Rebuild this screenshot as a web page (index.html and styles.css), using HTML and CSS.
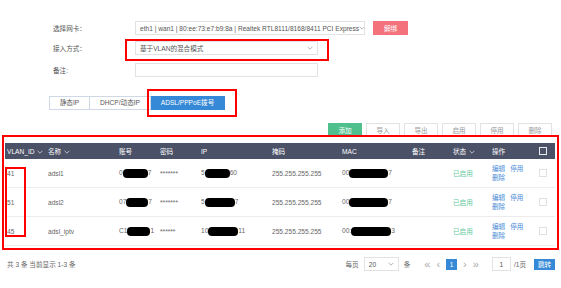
FILE: index.html
```html
<!DOCTYPE html>
<html lang="en">
<head>
    <meta charset="UTF-8">
    <title>WAN 设置</title>
    <link rel="stylesheet" href="styles.css">
</head>
<body>
    <div class="page">
        <div class="form">
            <div class="form-row row-nic">
                <label>选择网卡：</label>
                <div class="select wide">
                    <span>eth1 | wan1 | 80:ee:73:e7:b9:8a | Realtek RTL8111/8168/8411 PCI Express</span>
                    <svg class="chev" viewBox="0 0 10 6"><path d="M1 1l4 4 4-4" /></svg>
                </div>
                <button class="btn-red">解绑</button>
            </div>
            <div class="form-row row-mode">
                <label>接入方式：</label>
                <div class="select">
                    <span>基于VLAN的混合模式</span>
                    <svg class="chev" viewBox="0 0 10 6"><path d="M1 1l4 4 4-4" /></svg>
                </div>
            </div>
            <div class="form-row row-note">
                <label>备注:</label>
                <div class="input"></div>
            </div>
            <div class="tabs">
                <div class="tab">静态IP</div>
                <div class="tab">DHCP/动态IP</div>
                <div class="tab active">ADSL/PPPoE拨号</div>
            </div>
        </div>

        <div class="toolbar">
            <button class="tbtn green">添加</button>
            <button class="tbtn">导入</button>
            <button class="tbtn">导出</button>
            <button class="tbtn">启用</button>
            <button class="tbtn">停用</button>
            <button class="tbtn">删除</button>
        </div>

        <table class="grid">
            <colgroup>
                <col style="width:41px"><col style="width:71px"><col style="width:41px"><col style="width:41px">
                <col style="width:71px"><col style="width:70px"><col style="width:70px"><col style="width:41px">
                <col style="width:39px"><col style="width:47px"><col style="width:18px">
            </colgroup>
            <thead>
                <tr>
                    <th>VLAN_ID <svg class="chev w" viewBox="0 0 10 6"><path d="M1 1l4 4 4-4" /></svg></th>
                    <th>名称 <svg class="chev w" viewBox="0 0 10 6"><path d="M1 1l4 4 4-4" /></svg></th>
                    <th>账号</th>
                    <th>密码</th>
                    <th>IP</th>
                    <th>掩码</th>
                    <th>MAC</th>
                    <th>备注</th>
                    <th>状态 <svg class="chev w" viewBox="0 0 10 6"><path d="M1 1l4 4 4-4" /></svg></th>
                    <th>操作</th>
                    <th><span class="check dark"></span></th>
                </tr>
            </thead>
            <tbody>
                <tr>
                    <td>41</td>
                    <td>adsl1</td>
                    <td>0<span class="blot" style="width:25px"></span>7</td>
                    <td>*******</td>
                    <td>5<span class="blot" style="width:25px"></span>60</td>
                    <td>255.255.255.255</td>
                    <td>00<span class="blot" style="width:39px"></span>7</td>
                    <td></td>
                    <td class="ok">已启用</td>
                    <td class="ops"><a>编辑</a><a>停用</a><br><a>删除</a></td>
                    <td><span class="check"></span></td>
                </tr>
                <tr>
                    <td>51</td>
                    <td>adsl2</td>
                    <td>07<span class="blot" style="width:22px"></span>7</td>
                    <td>*******</td>
                    <td>5<span class="blot" style="width:30px"></span>7</td>
                    <td>255.255.255.255</td>
                    <td>00<span class="blot" style="width:39px"></span>7</td>
                    <td></td>
                    <td class="ok">已启用</td>
                    <td class="ops"><a>编辑</a><a>停用</a><br><a>删除</a></td>
                    <td><span class="check"></span></td>
                </tr>
                <tr>
                    <td>45</td>
                    <td>adsl_iptv</td>
                    <td>C1<span class="blot" style="width:23px"></span>1</td>
                    <td>******</td>
                    <td>10<span class="blot" style="width:30px"></span>11</td>
                    <td>255.255.255.255</td>
                    <td>00:<span class="blot" style="width:40px"></span>3</td>
                    <td></td>
                    <td class="ok">已启用</td>
                    <td class="ops"><a>编辑</a><a>停用</a><br><a>删除</a></td>
                    <td><span class="check"></span></td>
                </tr>
            </tbody>
        </table>

        <div class="footer">
            <div class="count">共 3 条 当前显示 1-3 条</div>
            <div class="pager">
                <span>每页</span>
                <div class="select small">
                    <span>20</span>
                    <svg class="chev" viewBox="0 0 10 6"><path d="M1 1l4 4 4-4" /></svg>
                </div>
                <span>条</span>
                <span class="nav first">«</span>
                <span class="nav">‹</span>
                <span class="cur">1</span>
                <span class="nav">›</span>
                <span class="nav">»</span>
                <div class="input page-in">1</div>
                <span>/1页</span>
                <button class="btn-blue">跳转</button>
            </div>
        </div>

        <!-- annotation boxes drawn on the screenshot -->
        <div class="mark mark-mode"></div>
        <div class="mark mark-tab"></div>
        <div class="mark mark-table"></div>
        <div class="mark mark-vlan"></div>
    </div>
</body>
</html>
```

FILE: styles.css
```css
body {
    margin: 0;
    background: #fff;
    font-family: "Liberation Sans", "Noto Sans CJK SC", sans-serif;
    font-size: 6.6px;
    color: #666;
}
.page {
    position: relative;
    width: 561px;
    height: 288px;
    overflow: hidden;
}
.form {
    padding: 21px 0 0 53px;
}
.form-row {
    display: flex;
    align-items: center;
    height: 14px;
}
.form-row label {
    width: 82px;
    color: #555;
}
.row-mode { margin-top: 6px; }
.row-note { margin-top: 8px; }
.select, .input {
    box-sizing: border-box;
    height: 14px;
    border: 1px solid #e2e2e2;
    background: #fff;
    display: flex;
    align-items: center;
    justify-content: space-between;
    padding: 0 4px;
    width: 183px;
    color: #555;
    white-space: nowrap;
    overflow: hidden;
}
.select.wide { width: 230px; }
.chev {
    width: 6px;
    height: 4px;
    flex: none;
    fill: none;
    stroke: #999;
    stroke-width: 1.2;
}
.chev.w {
    stroke: #e8eaf0;
    margin-left: 1px;
    vertical-align: middle;
}
.btn-red {
    margin-left: 8px;
    width: 35px;
    height: 14px;
    border: none;
    background: #f4727c;
    color: #fff;
    font: inherit;
    padding: 0;
}
.tabs {
    display: flex;
    margin: 19px 0 0 -4px;
}
.tab {
    box-sizing: border-box;
    height: 14px;
    line-height: 12px;
    border: 1px solid #cfd8e6;
    padding: 0;
    text-align: center;
    white-space: nowrap;
    color: #555;
}
.tab + .tab { border-left: none; }
.tab:first-child { width: 41px; }
.tab:nth-child(2) { width: 61px; }
.tab.active {
    width: 74px;
    background: #3689d6;
    border-color: #3689d6;
    color: #fff;
}
.toolbar {
    display: flex;
    justify-content: flex-end;
    gap: 4px;
    margin: 13px 9px 0 0;
}
.tbtn {
    width: 34px;
    height: 14px;
    padding: 0;
    border: 1px solid #e2e2e2;
    background: #fff;
    color: #999;
    font: inherit;
}
.tbtn.green {
    background: #4fc08d;
    border-color: #4fc08d;
    color: #fff;
}
.grid {
    margin: 6px 0 0 5px;
    width: 550px;
    table-layout: fixed;
    border-collapse: collapse;
}
.grid th {
    background: #4b5167;
    color: #fff;
    font-weight: normal;
    text-align: left;
    height: 16px;
    padding: 0 0 0 2px;
    white-space: nowrap;
}
.grid td {
    height: 28px;
    padding: 0 0 0 2px;
    border-bottom: 1px solid #ececec;
    white-space: nowrap;
}
.grid td.ok { color: #62c99c; }
.ops a {
    color: #4a8bd6;
    line-height: 9px;
}
.ops a:nth-child(2) { margin-left: 5px; }
.check {
    display: inline-block;
    width: 6px;
    height: 6px;
    border: 1px solid #e0e0e0;
    vertical-align: middle;
}
.check.dark { border-color: #e8eaf0; }
.blot {
    display: inline-block;
    height: 9px;
    background: #000;
    border-radius: 4px;
    vertical-align: middle;
}
.footer {
    display: flex;
    justify-content: space-between;
    align-items: center;
    margin: 11px 6px 0 7px;
}
.count { color: #666; }
.pager {
    display: flex;
    align-items: center;
    color: #666;
}
.select.small {
    width: 35px;
    height: 14px;
    margin: 0 5px 0 5px;
}
.nav {
    font-size: 11px;
    color: #aaa;
    margin-left: 6px;
    line-height: 10px;
}
.nav.first { margin-left: 14px; }
.cur {
    background: #3689d6;
    color: #fff;
    width: 11px;
    height: 11px;
    line-height: 11px;
    text-align: center;
    margin-left: 6px;
}
.page-in {
    width: 19px;
    justify-content: center;
    margin: 0 3px 0 13px;
}
.btn-blue {
    margin-left: 8px;
    width: 21px;
    height: 11px;
    border: none;
    padding: 0;
    background: #3689d6;
    color: #fff;
    font: inherit;
}
.mark {
    position: absolute;
    border: 2px solid #f00;
    box-sizing: border-box;
}
.mark-mode { left: 125px; top: 39px; width: 204px; height: 22px; }
.mark-tab { left: 147px; top: 89px; width: 90px; height: 28px; }
.mark-table { left: 2px; top: 135px; width: 557px; height: 115px; }
.mark-vlan { left: 5px; top: 167px; width: 21px; height: 70px; }
```
